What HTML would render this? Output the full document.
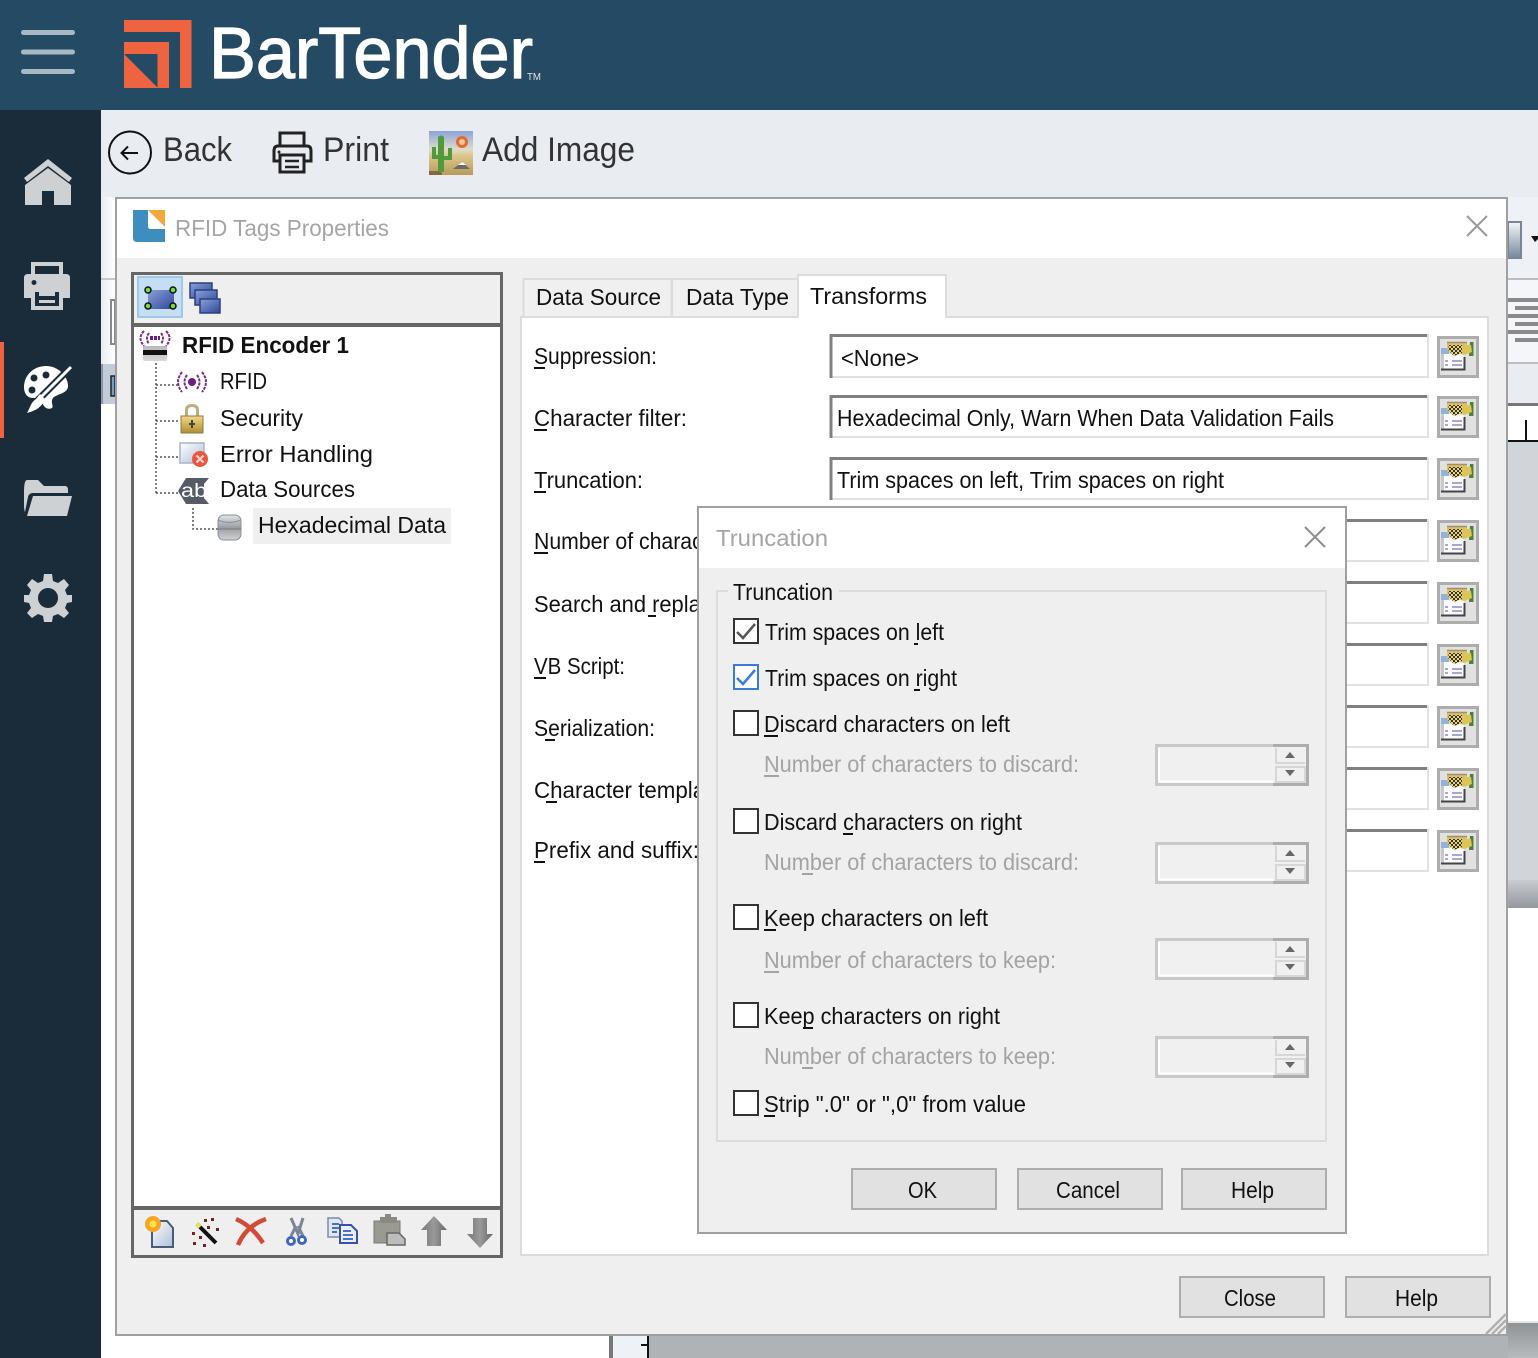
<!DOCTYPE html>
<html><head><meta charset="utf-8"><title>BarTender</title>
<style>
html,body{margin:0;padding:0;background:#fff;width:1538px;height:1358px;overflow:hidden}
svg{display:block}
text{font-family:"Liberation Sans",sans-serif;font-size:23px;fill:#111}
.g{fill:#a3a3a3}
.tb{font-size:34px;fill:#333}
.u{fill:#111}
.ug{fill:#a3a3a3}
</style></head><body>
<svg xmlns="http://www.w3.org/2000/svg" width="1538" height="1358" viewBox="0 0 1538 1358">
<defs>
<linearGradient id="gb" x1="0" y1="0" x2="0" y2="1"><stop offset="0" stop-color="#f4f6f8"/><stop offset="1" stop-color="#76879a"/></linearGradient>
<linearGradient id="gs" x1="0" y1="0" x2="0" y2="1"><stop offset="0" stop-color="#c9ccd1"/><stop offset="1" stop-color="#94979b"/></linearGradient>
<linearGradient id="gb2" x1="0" y1="0" x2="0" y2="1"><stop offset="0" stop-color="#8f9396"/><stop offset="1" stop-color="#b8bbbd"/></linearGradient>
<linearGradient id="gl" x1="0" y1="0" x2="1" y2="0"><stop offset="0" stop-color="#e8ecf2"/><stop offset="1" stop-color="#fff"/></linearGradient>
<linearGradient id="gf" x1="0" y1="0" x2="1" y2="1"><stop offset="0" stop-color="#fff"/><stop offset="1" stop-color="#aebed8"/></linearGradient>
<linearGradient id="gar" x1="0" y1="0" x2="1" y2="0"><stop offset="0" stop-color="#777"/><stop offset=".5" stop-color="#9a9a9a"/><stop offset="1" stop-color="#666"/></linearGradient>
<linearGradient id="gblue" x1="0" y1="0" x2="1" y2="1"><stop offset="0" stop-color="#8aa0dc"/><stop offset="1" stop-color="#2f4896"/></linearGradient>
<linearGradient id="gdb" x1="0" y1="0" x2="0" y2="1"><stop offset="0" stop-color="#e4e6e8"/><stop offset=".5" stop-color="#9a9ea2"/><stop offset="1" stop-color="#d0d2d4"/></linearGradient>
<linearGradient id="gsk" x1="0" y1="0" x2="0" y2="1"><stop offset="0" stop-color="#8aa4da"/><stop offset=".42" stop-color="#e0dcc8"/><stop offset=".55" stop-color="#dcc88c"/><stop offset="1" stop-color="#b89a5c"/></linearGradient>
<linearGradient id="glk" x1="0" y1="0" x2="0" y2="1"><stop offset="0" stop-color="#f3d986"/><stop offset="1" stop-color="#b08d33"/></linearGradient>
<linearGradient id="gcd" x1="0" y1="0" x2="0" y2="1"><stop offset="0" stop-color="#b8b8b8"/><stop offset="1" stop-color="#d8d8d8"/></linearGradient>
<pattern id="chk" width="4" height="4" patternUnits="userSpaceOnUse"><rect width="4" height="4" fill="#e6d27a"/><rect width="2" height="2" fill="#3a3428"/><rect x="2" y="2" width="2" height="2" fill="#3a3428"/></pattern>

<g id="pb">
<rect x="1.500" y="1.500" width="39" height="39" fill="#e1e1e1" stroke="#adadad" stroke-width="3"/>
<rect x="4" y="12" width="8" height="8" fill="#8fb3de"/>
<rect x="4" y="18" width="23" height="15" fill="#fbfbff"/>
<rect x="4" y="18" width="3" height="15" fill="#c8c8c8"/>
<path d="M8 25h3M15 25h10M8 29h3M15 29h10" stroke="#a8a8cc" stroke-width="2"/>
<path d="M4 33.500H27.500V21" fill="none" stroke="#444" stroke-width="2"/>
<path d="M33 6H36.500V20H32Z" fill="#4f7f3a"/>
<path d="M10 7H30V9H34L35 16 27 19 23 18 17 20 10 14Z" fill="#dcc455"/>
<path d="M12 9H25V17L22 18 17 20 11 14Z" fill="url(#chk)"/>
<path d="M10 6.500H30" stroke="#a08c7c" stroke-width="1.500"/>
</g>
<g id="spin">
<rect x="1.500" y="1.500" width="151" height="39" fill="#f0f0f0" stroke="#c9c9c9" stroke-width="3"/>
<path d="M4 37.500H118" stroke="#fff" stroke-width="2"/><path d="M4 4V37" stroke="#fff" stroke-width="2"/>
<path d="M118 1.500H152.500V40.500H118" fill="none" stroke="#adadad" stroke-width="3"/>
<path d="M121 4V19H150" fill="none" stroke="#d6d6d6" stroke-width="2"/>
<path d="M121 23H150V38H121Z" fill="none" stroke="#d6d6d6" stroke-width="2"/>
<path d="M135 8l5 6h-10Z" fill="#666"/><path d="M130 26h10l-5 6Z" fill="#666"/>
</g>
<g id="cb"><rect x="1" y="1" width="24" height="24" fill="#fff" stroke="#333" stroke-width="2"/></g>
</defs>

<!-- backgrounds -->
<rect width="1538" height="110" fill="#254b64"/>
<rect x="0" y="110" width="101" height="1248" fill="#1a2c39"/>
<rect x="101" y="110" width="1437" height="87" fill="#e9edf2"/>

<!-- right side peek -->
<rect x="1508" y="197" width="30" height="712" fill="#eef1f5"/>
<rect x="1508" y="222" width="13" height="36" fill="url(#gb)" stroke="#76879a" stroke-width="2"/>
<path d="M1531 236h8v2l-4 4Z" fill="#111"/>
<rect x="1508" y="278" width="30" height="2" fill="#bcbcbc"/>
<rect x="1508" y="280" width="30" height="82" fill="#f5f6f9"/>
<rect x="1508" y="298" width="30" height="4" fill="#8a8a8a"/>
<rect x="1515" y="306" width="23" height="4" fill="#8a8a8a"/>
<rect x="1508" y="314" width="30" height="4" fill="#8a8a8a"/>
<rect x="1515" y="322" width="23" height="4" fill="#8a8a8a"/>
<rect x="1508" y="330" width="30" height="4" fill="#8a8a8a"/>
<rect x="1515" y="338" width="23" height="4" fill="#8a8a8a"/>
<rect x="1508" y="362" width="30" height="2" fill="#bcbcbc"/>
<rect x="1508" y="364" width="30" height="39" fill="#e9edf2"/>
<rect x="1508" y="403" width="30" height="3" fill="#777"/>
<rect x="1508" y="406" width="30" height="34" fill="#fff"/>
<rect x="1525" y="420" width="2" height="20" fill="#111"/>
<rect x="1508" y="440" width="30" height="2" fill="#111"/>
<rect x="1508" y="442" width="30" height="438" fill="#d1d4d9"/>
<rect x="1508" y="880" width="30" height="28" fill="url(#gs)"/>
<rect x="1508" y="908" width="30" height="414" fill="#fff"/>
<rect x="1508" y="1321" width="30" height="2" fill="#e6e6e6"/>
<rect x="1508" y="1323" width="30" height="35" fill="url(#gb2)"/>

<!-- left side peek -->
<rect x="101" y="197" width="14" height="1161" fill="#fff"/>
<rect x="101" y="197" width="14" height="168" fill="url(#gl)"/>
<rect x="101" y="278" width="14" height="2" fill="#c8c8c8"/>
<rect x="111" y="300" width="4" height="44" fill="#fff" stroke="#888" stroke-width="2"/>
<rect x="102" y="364" width="13" height="40" fill="#c0ccd9"/>
<rect x="101" y="364" width="2" height="40" fill="#8c96a0"/>
<rect x="111" y="376" width="4" height="20" fill="#7b9bc0" stroke="#222" stroke-width="1.500"/>

<!-- bottom peek -->
<rect x="115" y="1336" width="1393" height="22" fill="#fff"/>
<rect x="609" y="1336" width="4" height="22" fill="#777"/>
<rect x="613" y="1336" width="34" height="22" fill="#eef1f6"/>
<rect x="641" y="1344" width="6" height="2" fill="#111"/>
<rect x="647" y="1336" width="2" height="22" fill="#111"/>
<rect x="649" y="1336" width="859" height="22" fill="#b0b3b5"/>

<!-- header -->
<g fill="#a9b9c4"><rect x="21" y="30" width="54" height="5" rx="2.500"/><rect x="21" y="49.500" width="54" height="5" rx="2.500"/><rect x="21" y="69" width="54" height="5" rx="2.500"/></g>
<path d="M124 20H191.500V88H180V32H124Z" fill="#ee6340"/>
<path d="M124 42H169V88H124Z" fill="#ee6340"/>
<path d="M124 54H157.500V87.500Z" fill="#254b64"/>
<text x="209" y="78" textLength="324" lengthAdjust="spacingAndGlyphs" style="font-size:72px;fill:#fff;stroke:#fff;stroke-width:1.300px">BarTender</text>
<text x="527" y="80" textLength="14" lengthAdjust="spacingAndGlyphs" style="font-size:10px;fill:#dfe6ea">TM</text>

<!-- sidebar icons -->
<rect x="0" y="342" width="4" height="96" fill="#ee6340"/>
<g fill="#cdd1d4">
<path d="M24 178L48 159 72 178 69 182 48 166 27 182Z"/>
<path d="M25 185L48 168 71 185V205H54V191H42V205H25Z"/>
<path fill-rule="evenodd" d="M31 262H63V274H66Q70 274 70 278V298H63V310H31V298H24V278Q24 274 28 274H31ZM35 266V274H59V266ZM35 292V306H59V292ZM39 292H55V296H39ZM39 300H55V303H39ZM34 280a2.500 2.500 0 1 0 .01 0Z"/>
<path d="M24 492Q24 480 27 480H38L44 486H65Q68 486 68 490V493H33Q29 493 28 497L25 512Q24 510 24 505Z"/>
<path d="M33 496H72L67 516H27Z"/>
<path fill-rule="evenodd" d="M44 574H52L53 581 58 583 64 579 69 585 65 590 67 595 72 595V602L67 603 65 608 69 613 64 618 58 614 53 616 52 622H44L43 616 38 614 32 618 27 613 31 608 29 603 24 602V595L29 595 31 590 27 585 32 579 38 583 43 581ZM48 588a10 10 0 1 0 .01 0Z"/>
</g>
<!-- palette -->
<path fill="#fff" d="M46 366C33 366 24 376 24 387 24 393 27 398 33 398 37 398 40 398 42 402 44 408 48 410 52 408 54 406 50 402 53 398 56 394 68 394 68 386 68 376 58 366 46 366Z"/>
<circle cx="34" cy="378" r="3.500" fill="#1a2c39"/><circle cx="46" cy="375" r="3.500" fill="#1a2c39"/><circle cx="32" cy="390" r="3.500" fill="#1a2c39"/>
<path d="M73 365L37 401" stroke="#1a2c39" stroke-width="7"/>
<path d="M71 367L41 397" stroke="#fff" stroke-width="3"/>
<path fill="#fff" d="M40 394L45 399C42 406 38 410 27 413 30 408 31 402 36 399Z"/>

<!-- toolbar -->
<ellipse cx="130" cy="152.500" rx="21" ry="21" fill="none" stroke="#111" stroke-width="2"/>
<path d="M138 153H122M128 146.500L121.500 153 128 159.500" fill="none" stroke="#111" stroke-width="2"/>
<text x="163" y="161" textLength="69" lengthAdjust="spacingAndGlyphs" class="tb">Back</text>
<g fill="none" stroke="#222" stroke-width="3">
<path d="M280 147V133H304V147"/>
<path d="M280 161H274V151Q274 146 278 146H307Q311 146 311 151V161H304"/>
<rect x="280" y="155" width="24" height="17"/>
<path d="M285 161H299M285 167H299" stroke-width="2.500"/>
</g>
<circle cx="279" cy="152" r="1.500" fill="#222"/>
<text x="323" y="161" textLength="66" lengthAdjust="spacingAndGlyphs" class="tb">Print</text>
<rect x="429" y="131" width="44" height="44" fill="url(#gsk)"/>
<path d="M429 171H439L442 173V175H429Z" fill="#7f6a38"/>
<path d="M438 172V137Q441 134 444 137V172Z M432 147h4v8h2v4h-6Z M448 148h4v12h-8v-4h4Z" fill="#4f9a3c"/>
<circle cx="462" cy="142" r="4.500" fill="#f6c9a0" stroke="#e26a36" stroke-width="3"/>
<path d="M453 169l9-7 8 7Z" fill="#6a6a6a"/><path d="M458 165l4-3 4 3Z" fill="#fff"/>
<text x="482" y="161" textLength="153" lengthAdjust="spacingAndGlyphs" class="tb">Add Image</text>

<!-- main dialog -->
<rect x="116" y="198" width="1391" height="1137" fill="#efefef" stroke="#a0a0a0" stroke-width="2"/>
<rect x="117" y="199" width="1389" height="59" fill="#fff"/>
<path d="M133 210H165V242H137Q133 242 133 238Z" fill="#3d8ebf"/>
<path d="M148 210H165V227Z" fill="#f3a83c"/>
<path d="M148 210V226Q148 229 151 229H165V227L148 210Z" fill="#fff"/>
<text x="175" y="236" textLength="214" lengthAdjust="spacingAndGlyphs" style="fill:#a5a5a5">RFID Tags Properties</text>
<path d="M1467 216L1487 236M1487 216L1467 236" stroke="#9a9a9a" stroke-width="2"/>

<!-- tree pane -->
<rect x="132.500" y="273.500" width="369" height="983" fill="#fff" stroke="#666" stroke-width="3"/>
<rect x="134" y="275" width="366" height="48" fill="#efefef"/>
<rect x="134" y="323" width="366" height="4" fill="#666"/>
<rect x="134" y="1206" width="366" height="4" fill="#666"/>
<rect x="134" y="1210" width="366" height="45" fill="#efefef"/>
<rect x="138" y="277" width="44" height="40" fill="#c4def4" stroke="#a0c8ec" stroke-width="2"/>
<rect x="148" y="290" width="26" height="19" fill="url(#gblue)"/>
<g fill="#6fe04a" stroke="#111" stroke-width="1.500"><circle cx="148" cy="290" r="3"/><circle cx="173" cy="290" r="3"/><circle cx="148" cy="306" r="3"/><circle cx="173" cy="306" r="3"/></g>
<g stroke="#2c3f80" stroke-width="1.500"><rect x="190" y="283" width="22" height="15" fill="url(#gblue)"/><rect x="195" y="290" width="22" height="15" fill="url(#gblue)"/><rect x="200" y="299" width="20" height="14" fill="url(#gblue)"/></g>

<!-- tree -->
<g fill="none" stroke="#555" stroke-width="1.500" stroke-dasharray="2 2">
<path d="M156 363V493M156 385H178M156 421H180M156 457H180M156 493H180M193 508V529H218"/>
</g>
<g fill="none" stroke="#7a2a88" stroke-width="2" stroke-dasharray="3 1">
<path d="M144 331Q137 338 144 346M149 333Q145 338 149 344M166 331Q173 338 166 346M161 333Q165 338 161 344"/>
<path d="M182 372Q174 382 182 392M187 375Q182 382 187 389M202 372Q210 382 202 392M197 375Q202 382 197 389"/>
</g>
<path d="M150 338H160" stroke="#6a1f80" stroke-width="4" stroke-dasharray="3 1"/>
<circle cx="192" cy="382" r="4" fill="#6a1f80"/>
<rect x="143" y="346" width="24" height="15" rx="2" fill="url(#gcd)"/><rect x="143" y="350" width="24" height="5" fill="#111"/>
<path d="M185 416V410Q185 404 192 404 199 404 199 410V416H196V410Q196 407 192 407 188 407 188 410V416Z" fill="#bcae80"/>
<rect x="181" y="416" width="22" height="17" fill="url(#glk)" stroke="#8a7b4e"/>
<path d="M192 420v8M189 424h6" stroke="#444" stroke-width="2"/>
<rect x="180" y="443" width="24" height="20" fill="url(#gf)" stroke="#a8b4c6" stroke-width="1.500"/>
<circle cx="200" cy="459" r="8" fill="#e8583f"/>
<path d="M196.500 455.500l7 7M203.500 455.500l-7 7" stroke="#f6d8d0" stroke-width="2"/>
<path d="M186 478H209L204 484V498L209 504H186L178 491Z" fill="#555c68"/>
<text x="181" y="497" textLength="26" lengthAdjust="spacingAndGlyphs" style="font-size:19px;fill:#fff">ab</text>
<rect x="218" y="515" width="23" height="25" rx="6" fill="url(#gdb)" stroke="#8d9094"/>
<path d="M218 520Q229 525 241 520" fill="none" stroke="#8d9094"/>
<path d="M218 529H241" stroke="#777"/>

<text x="182" y="353" textLength="167" lengthAdjust="spacingAndGlyphs" style="font-weight:bold">RFID Encoder 1</text>
<text x="220" y="389" textLength="47" lengthAdjust="spacingAndGlyphs">RFID</text>
<text x="220" y="426" textLength="83" lengthAdjust="spacingAndGlyphs">Security</text>
<text x="220" y="462" textLength="153" lengthAdjust="spacingAndGlyphs">Error Handling</text>
<text x="220" y="497" textLength="135" lengthAdjust="spacingAndGlyphs">Data Sources</text>
<rect x="253" y="508" width="198" height="36" fill="#efefef"/>
<text x="258" y="533" textLength="188" lengthAdjust="spacingAndGlyphs">Hexadecimal Data</text>

<!-- bottom toolbar icons -->
<path d="M152 1221H167L173 1228V1247H152Z" fill="url(#gf)" stroke="#4a5c78" stroke-width="2"/>
<circle cx="153" cy="1224" r="8" fill="#f5a623"/><circle cx="153" cy="1224" r="3.500" fill="#ffe14a"/>
<path d="M197 1224L216 1243" stroke="#111" stroke-width="4"/><path d="M197 1224L200 1227" stroke="#f2e14a" stroke-width="4"/>
<g fill="#7a2020"><rect x="204" y="1219" width="3" height="3"/><rect x="211" y="1218" width="3" height="3"/><rect x="216" y="1228" width="3" height="3"/><rect x="207" y="1226" width="3" height="3"/><rect x="192" y="1232" width="3" height="3"/><rect x="199" y="1236" width="3" height="3"/><rect x="193" y="1242" width="3" height="3"/><rect x="203" y="1244" width="3" height="3"/></g>
<path d="M236 1219Q252 1226 263 1243M266 1219Q246 1226 238 1245" fill="none" stroke="#d24a38" stroke-width="4.500"/>
<path d="M291 1218L298 1234 303 1218M291 1236L296 1226M303 1236L298 1226" fill="none" stroke="#7d8494" stroke-width="3"/>
<circle cx="291" cy="1241" r="3.500" fill="#fff" stroke="#3f66c0" stroke-width="3"/><circle cx="302" cy="1240" r="3.500" fill="#fff" stroke="#3f66c0" stroke-width="3"/>
<path d="M328 1218H339L342 1221V1237H328Z" fill="#dfe7f6" stroke="#7d8ca8" stroke-width="1.500"/>
<path d="M340 1225H351L357 1231V1243H340Z" fill="#e8eefa" stroke="#3752a8" stroke-width="2"/>
<path d="M332 1224h7M332 1228h7M332 1232h5M343 1231h8M343 1235h10M343 1239h10" stroke="#4a70c8" stroke-width="2"/>
<rect x="374" y="1221" width="26" height="22" fill="#9a9a90" stroke="#777"/>
<path d="M380 1221V1217H385V1214H391V1217H397V1223H380Z" fill="#8a8a84"/>
<path d="M387 1233H399L405 1239V1245H387Z" fill="#bcbcbc" stroke="#666" stroke-width="1.500"/>
<path d="M434 1216L447 1230H441V1246H427V1230H421Z" fill="url(#gar)"/>
<path d="M473 1218H487V1234H493L480 1248 467 1234H473Z" fill="url(#gar)"/>

<!-- tabs + panel -->
<rect x="521" y="317" width="967" height="938" fill="#fff" stroke="#dcdcdc" stroke-width="2"/>
<rect x="523.500" y="279" width="148" height="38" fill="#f0f0f0" stroke="#dcdcdc" stroke-width="2"/>
<rect x="672" y="279" width="126" height="38" fill="#f0f0f0" stroke="#dcdcdc" stroke-width="2"/>
<path d="M798 318V275H946V318" fill="#fff" stroke="#dcdcdc" stroke-width="2"/>
<text x="536" y="305" textLength="125" lengthAdjust="spacingAndGlyphs">Data Source</text>
<text x="686" y="305" textLength="103" lengthAdjust="spacingAndGlyphs">Data Type</text>
<text x="810" y="304" textLength="117" lengthAdjust="spacingAndGlyphs">Transforms</text>

<!-- fields -->
<g id="fields" fill="#fff" stroke="#e1e1e1" stroke-width="2">
<rect x="831" y="335" width="597" height="42"/>
<rect x="831" y="396" width="597" height="41"/>
<rect x="831" y="458" width="597" height="41"/>
<rect x="831" y="520" width="597" height="41"/>
<rect x="831" y="582" width="597" height="41"/>
<rect x="831" y="644" width="597" height="41"/>
<rect x="831" y="706" width="597" height="41"/>
<rect x="831" y="768" width="597" height="41"/>
<rect x="831" y="830" width="597" height="41"/>
</g>
<g fill="none" stroke="#808080" stroke-width="3">
<path d="M831 378V335.500H1427"/><path d="M831 438V396.500H1427"/><path d="M831 500V458.500H1427"/><path d="M831 562V520.500H1427"/><path d="M831 624V582.500H1427"/><path d="M831 686V644.500H1427"/><path d="M831 748V706.500H1427"/><path d="M831 810V768.500H1427"/><path d="M831 872V830.500H1427"/>
</g>
<use href="#pb" x="1437" y="336"/><use href="#pb" x="1437" y="396"/><use href="#pb" x="1437" y="458"/><use href="#pb" x="1437" y="520"/><use href="#pb" x="1437" y="582"/><use href="#pb" x="1437" y="644"/><use href="#pb" x="1437" y="706"/><use href="#pb" x="1437" y="768"/><use href="#pb" x="1437" y="830"/>
<text x="841" y="366" textLength="78" lengthAdjust="spacingAndGlyphs">&lt;None&gt;</text>
<text x="837" y="426" textLength="497" lengthAdjust="spacingAndGlyphs">Hexadecimal Only, Warn When Data Validation Fails</text>
<text x="837" y="488" textLength="387" lengthAdjust="spacingAndGlyphs">Trim spaces on left, Trim spaces on right</text>

<text x="534" y="364" textLength="123" lengthAdjust="spacingAndGlyphs">Suppression:</text>
<text x="534" y="426" textLength="153" lengthAdjust="spacingAndGlyphs">Character filter:</text>
<text x="534" y="488" textLength="109" lengthAdjust="spacingAndGlyphs">Truncation:</text>
<text x="534" y="549" textLength="210" lengthAdjust="spacingAndGlyphs">Number of characters:</text>
<text x="534" y="612" textLength="196" lengthAdjust="spacingAndGlyphs">Search and replace:</text>
<text x="534" y="674" textLength="91" lengthAdjust="spacingAndGlyphs">VB Script:</text>
<text x="534" y="736" textLength="121" lengthAdjust="spacingAndGlyphs">Serialization:</text>
<text x="534" y="798" textLength="196" lengthAdjust="spacingAndGlyphs">Character template:</text>
<text x="534" y="858" textLength="165" lengthAdjust="spacingAndGlyphs">Prefix and suffix:</text>
<g class="u"><rect x="534" y="367" width="11" height="2"/><rect x="534" y="429" width="13" height="2"/><rect x="534" y="491" width="12" height="2"/><rect x="534" y="552" width="14" height="2"/><rect x="648" y="615" width="8" height="2"/><rect x="534" y="677" width="12" height="2"/><rect x="545" y="739" width="10" height="2"/><rect x="546" y="801" width="11" height="2"/><rect x="534" y="861" width="11" height="2"/></g>

<!-- bottom buttons -->
<rect x="1180" y="1277" width="144" height="40" fill="#e1e1e1" stroke="#adadad" stroke-width="2"/>
<rect x="1346" y="1277" width="144" height="40" fill="#e1e1e1" stroke="#adadad" stroke-width="2"/>
<text x="1224" y="1306" textLength="52" lengthAdjust="spacingAndGlyphs">Close</text>
<text x="1395" y="1306" textLength="43" lengthAdjust="spacingAndGlyphs">Help</text>
<path d="M1486 1334L1506 1314M1492 1334L1506 1320M1498 1334L1506 1326" stroke="#b0b0b0" stroke-width="2.500"/>

<!-- truncation dialog -->
<rect x="698" y="507" width="648" height="726" fill="#efefef" stroke="#a0a0a0" stroke-width="2"/>
<rect x="699" y="508" width="646" height="60" fill="#fff"/>
<text x="716" y="546" textLength="112" lengthAdjust="spacingAndGlyphs" style="fill:#a5a5a5">Truncation</text>
<path d="M1305 527L1325 547M1325 527L1305 547" stroke="#8e8e8e" stroke-width="2"/>
<rect x="717" y="591" width="609" height="550" fill="none" stroke="#dcdcdc" stroke-width="2"/>
<rect x="728" y="582" width="111" height="18" fill="#efefef"/>
<text x="733" y="600" textLength="100" lengthAdjust="spacingAndGlyphs">Truncation</text>

<use href="#cb" x="733" y="618"/>
<path d="M737 632L743 638 755 624" fill="none" stroke="#555" stroke-width="2.500"/>
<rect x="734" y="665" width="24" height="24" fill="#fff" stroke="#3a7bd5" stroke-width="2"/>
<path d="M737 678L743 684 755 670" fill="none" stroke="#3a7bd5" stroke-width="2.500"/>
<use href="#cb" x="733" y="710"/><use href="#cb" x="733" y="808"/><use href="#cb" x="733" y="904"/><use href="#cb" x="733" y="1002"/><use href="#cb" x="733" y="1090"/>

<text x="765" y="640" textLength="179" lengthAdjust="spacingAndGlyphs">Trim spaces on left</text>
<text x="765" y="686" textLength="192" lengthAdjust="spacingAndGlyphs">Trim spaces on right</text>
<text x="764" y="732" textLength="246" lengthAdjust="spacingAndGlyphs">Discard characters on left</text>
<text x="764" y="772" textLength="315" lengthAdjust="spacingAndGlyphs" class="g">Number of characters to discard:</text>
<text x="764" y="830" textLength="258" lengthAdjust="spacingAndGlyphs">Discard characters on right</text>
<text x="764" y="870" textLength="315" lengthAdjust="spacingAndGlyphs" class="g">Number of characters to discard:</text>
<text x="764" y="926" textLength="224" lengthAdjust="spacingAndGlyphs">Keep characters on left</text>
<text x="764" y="968" textLength="292" lengthAdjust="spacingAndGlyphs" class="g">Number of characters to keep:</text>
<text x="764" y="1024" textLength="236" lengthAdjust="spacingAndGlyphs">Keep characters on right</text>
<text x="764" y="1064" textLength="292" lengthAdjust="spacingAndGlyphs" class="g">Number of characters to keep:</text>
<text x="764" y="1112" textLength="262" lengthAdjust="spacingAndGlyphs">Strip ".0" or ",0" from value</text>
<g class="u"><rect x="914" y="643" width="4" height="2"/><rect x="914" y="689" width="6" height="2"/><rect x="764" y="735" width="14" height="2"/><rect x="843" y="833" width="10" height="2"/><rect x="764" y="929" width="12" height="2"/><rect x="803" y="1027" width="10" height="2"/><rect x="764" y="1115" width="11" height="2"/></g>
<g class="ug"><rect x="764" y="775" width="15" height="2"/><rect x="802" y="873" width="11" height="2"/><rect x="764" y="971" width="15" height="2"/><rect x="802" y="1067" width="11" height="2"/></g>

<use href="#spin" x="1155" y="744"/><use href="#spin" x="1155" y="842"/><use href="#spin" x="1155" y="938"/><use href="#spin" x="1155" y="1036"/>

<rect x="852" y="1169" width="144" height="40" fill="#e1e1e1" stroke="#adadad" stroke-width="2"/>
<rect x="1018" y="1169" width="144" height="40" fill="#e1e1e1" stroke="#adadad" stroke-width="2"/>
<rect x="1182" y="1169" width="144" height="40" fill="#e1e1e1" stroke="#adadad" stroke-width="2"/>
<text x="908" y="1198" textLength="29" lengthAdjust="spacingAndGlyphs">OK</text>
<text x="1056" y="1198" textLength="64" lengthAdjust="spacingAndGlyphs">Cancel</text>
<text x="1231" y="1198" textLength="43" lengthAdjust="spacingAndGlyphs">Help</text>
</svg>
</body></html>
